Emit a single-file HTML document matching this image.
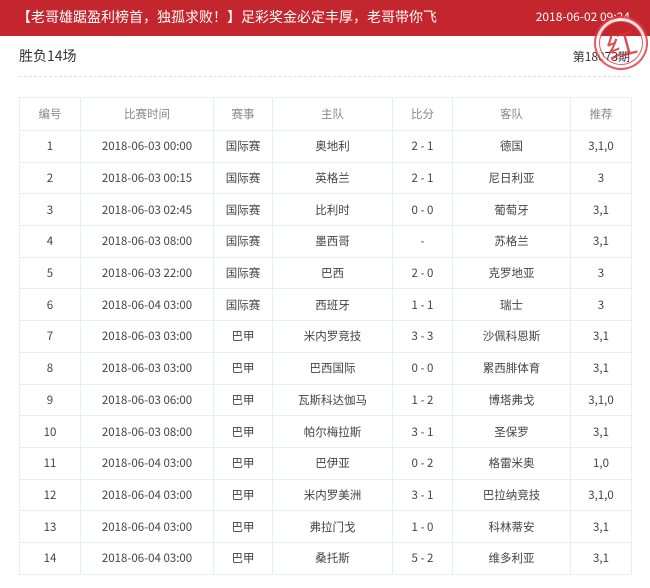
<!DOCTYPE html>
<html><head><meta charset="utf-8"><style>
body{margin:0;width:650px;height:588px;background:#fff;font-family:"Noto Sans CJK SC","Liberation Sans",sans-serif;position:relative;overflow:hidden}
.bar{position:absolute;left:0;top:0;width:650px;height:36px;background:#c4262e;color:#fff}
.bar .t{position:absolute;left:17px;top:7px;font-size:14px;line-height:20px}
.bar .d{position:absolute;right:20px;top:9px;font-size:12px;line-height:16px}
.title{position:absolute;left:19px;top:46px;font-size:14px;line-height:20px;color:#333}
.qi{position:absolute;right:20px;top:49px;font-size:12px;line-height:16px;color:#333}
.dash{position:absolute;left:19px;width:612px;top:76px;border-top:1px dashed #ddd}
table{position:absolute;left:19px;top:97px;width:612px;border-collapse:collapse;font-size:11.5px;color:#444;table-layout:fixed}
td,th{border:1px solid #e8ecf3;text-align:center;padding:0;height:30.7px;line-height:14px;vertical-align:middle}
th{height:32px;font-weight:normal;color:#888}
.stamp{position:absolute;left:594px;top:16px;width:50px;height:50px;border:2px solid #e0404a;border-radius:50%;color:#d8303a;font-size:30px;text-align:center;line-height:50px;transform:rotate(-15deg);box-shadow:inset 0 0 0 3px #fff,inset 0 0 0 4px #e0404a;opacity:.85}
</style></head><body>
<div class="bar"><span class="t">【老哥雄踞盈利榜首，独孤求败！】足彩奖金必定丰厚，老哥带你飞</span><span class="d">2018-06-02 09:24</span></div>
<div class="title">胜负14场</div>
<div class="qi">第18073期</div>
<div class="dash"></div>
<div class="stamp">红</div>
<table>
<colgroup><col style="width:61px"><col style="width:133px"><col style="width:59px"><col style="width:120px"><col style="width:60px"><col style="width:118px"><col style="width:61px"></colgroup>
<tr><th>编号</th><th>比赛时间</th><th>赛事</th><th>主队</th><th>比分</th><th>客队</th><th>推荐</th></tr>
<tr><td>1</td><td>2018-06-03 00:00</td><td>国际赛</td><td>奥地利</td><td>2 - 1</td><td>德国</td><td>3,1,0</td></tr>
<tr><td>2</td><td>2018-06-03 00:15</td><td>国际赛</td><td>英格兰</td><td>2 - 1</td><td>尼日利亚</td><td>3</td></tr>
<tr><td>3</td><td>2018-06-03 02:45</td><td>国际赛</td><td>比利时</td><td>0 - 0</td><td>葡萄牙</td><td>3,1</td></tr>
<tr><td>4</td><td>2018-06-03 08:00</td><td>国际赛</td><td>墨西哥</td><td>-</td><td>苏格兰</td><td>3,1</td></tr>
<tr><td>5</td><td>2018-06-03 22:00</td><td>国际赛</td><td>巴西</td><td>2 - 0</td><td>克罗地亚</td><td>3</td></tr>
<tr><td>6</td><td>2018-06-04 03:00</td><td>国际赛</td><td>西班牙</td><td>1 - 1</td><td>瑞士</td><td>3</td></tr>
<tr><td>7</td><td>2018-06-03 03:00</td><td>巴甲</td><td>米内罗竞技</td><td>3 - 3</td><td>沙佩科恩斯</td><td>3,1</td></tr>
<tr><td>8</td><td>2018-06-03 03:00</td><td>巴甲</td><td>巴西国际</td><td>0 - 0</td><td>累西腓体育</td><td>3,1</td></tr>
<tr><td>9</td><td>2018-06-03 06:00</td><td>巴甲</td><td>瓦斯科达伽马</td><td>1 - 2</td><td>博塔弗戈</td><td>3,1,0</td></tr>
<tr><td>10</td><td>2018-06-03 08:00</td><td>巴甲</td><td>帕尔梅拉斯</td><td>3 - 1</td><td>圣保罗</td><td>3,1</td></tr>
<tr><td>11</td><td>2018-06-04 03:00</td><td>巴甲</td><td>巴伊亚</td><td>0 - 2</td><td>格雷米奥</td><td>1,0</td></tr>
<tr><td>12</td><td>2018-06-04 03:00</td><td>巴甲</td><td>米内罗美洲</td><td>3 - 1</td><td>巴拉纳竞技</td><td>3,1,0</td></tr>
<tr><td>13</td><td>2018-06-04 03:00</td><td>巴甲</td><td>弗拉门戈</td><td>1 - 0</td><td>科林蒂安</td><td>3,1</td></tr>
<tr><td>14</td><td>2018-06-04 03:00</td><td>巴甲</td><td>桑托斯</td><td>5 - 2</td><td>维多利亚</td><td>3,1</td></tr>
</table>
</body></html>
